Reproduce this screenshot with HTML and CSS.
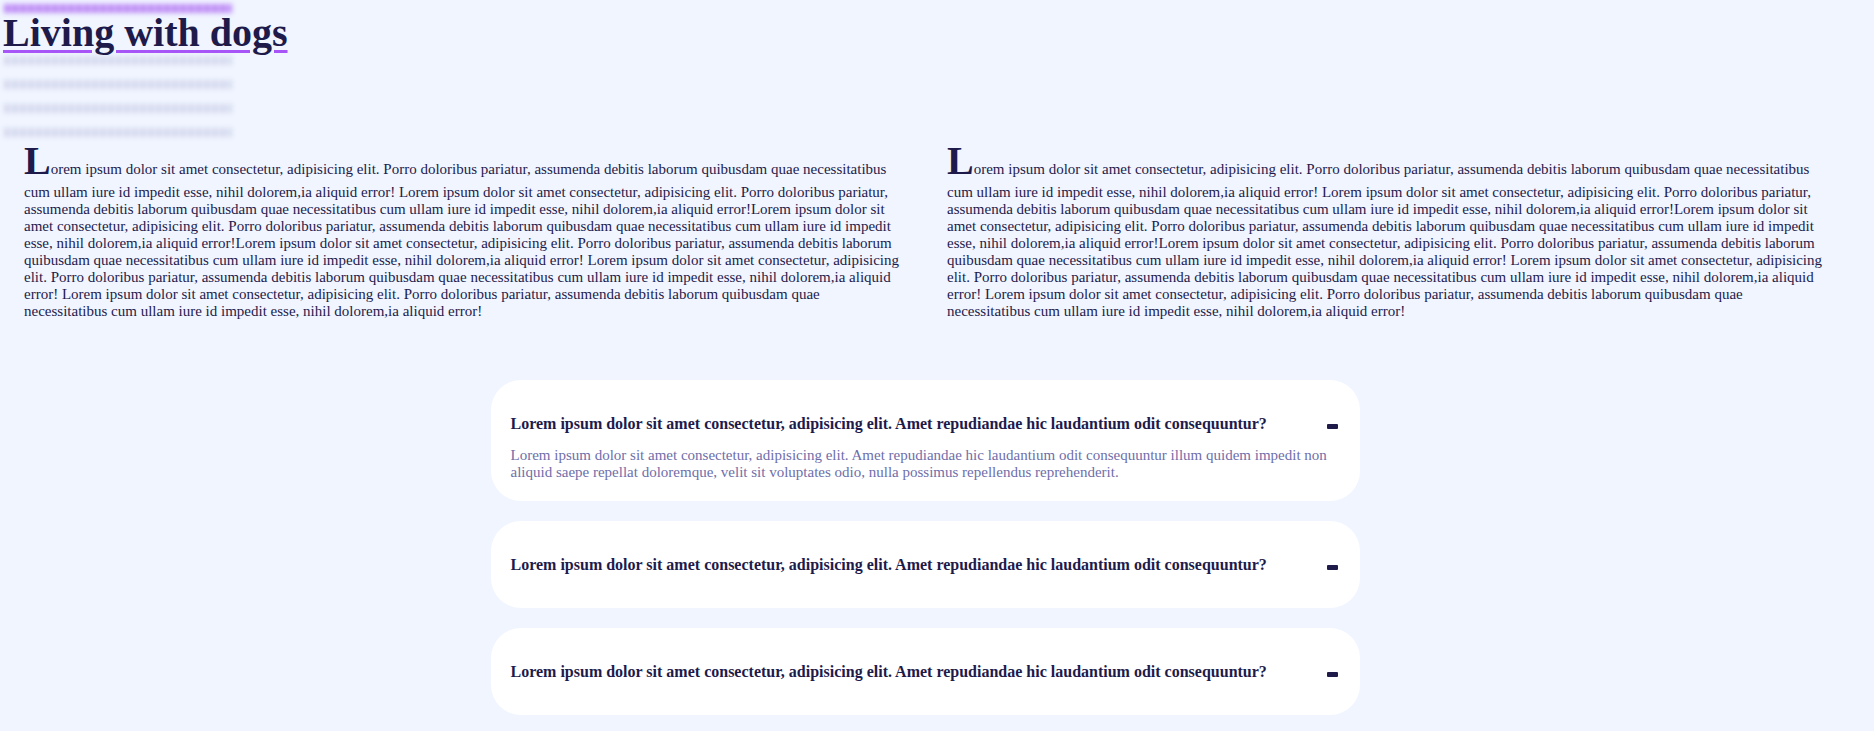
FILE: index.html
```html
<!DOCTYPE html>
<html lang="en">
<head>
<meta charset="utf-8">
<title>Living with dogs</title>
<link rel="stylesheet" href="styles.css">
</head>
<body>
<header class="site-header">
  <div class="blur-nav" aria-hidden="true">
    <span class="blur-line blur-line--active"></span>
    <span class="blur-line"></span>
    <span class="blur-line"></span>
    <span class="blur-line"></span>
    <span class="blur-line"></span>
  </div>
  <h1 class="title"><a class="title-link" href="#">Living with dogs</a></h1>
</header>

<main class="main">
  <section class="articles">
    <p class="article">Lorem ipsum dolor sit amet consectetur, adipisicing elit. Porro doloribus pariatur, assumenda debitis laborum quibusdam quae necessitatibus cum ullam iure id impedit esse, nihil dolorem,ia aliquid error! Lorem ipsum dolor sit amet consectetur, adipisicing elit. Porro doloribus pariatur, assumenda debitis laborum quibusdam quae necessitatibus cum ullam iure id impedit esse, nihil dolorem,ia aliquid error!Lorem ipsum dolor sit amet consectetur, adipisicing elit. Porro doloribus pariatur, assumenda debitis laborum quibusdam quae necessitatibus cum ullam iure id impedit esse, nihil dolorem,ia aliquid error!Lorem ipsum dolor sit amet consectetur, adipisicing elit. Porro doloribus pariatur, assumenda debitis laborum quibusdam quae necessitatibus cum ullam iure id impedit esse, nihil dolorem,ia aliquid error! Lorem ipsum dolor sit amet consectetur, adipisicing elit. Porro doloribus pariatur, assumenda debitis laborum quibusdam quae necessitatibus cum ullam iure id impedit esse, nihil dolorem,ia aliquid error! Lorem ipsum dolor sit amet consectetur, adipisicing elit. Porro doloribus pariatur, assumenda debitis laborum quibusdam quae necessitatibus cum ullam iure id impedit esse, nihil dolorem,ia aliquid error!</p>
    <p class="article">Lorem ipsum dolor sit amet consectetur, adipisicing elit. Porro doloribus pariatur, assumenda debitis laborum quibusdam quae necessitatibus cum ullam iure id impedit esse, nihil dolorem,ia aliquid error! Lorem ipsum dolor sit amet consectetur, adipisicing elit. Porro doloribus pariatur, assumenda debitis laborum quibusdam quae necessitatibus cum ullam iure id impedit esse, nihil dolorem,ia aliquid error!Lorem ipsum dolor sit amet consectetur, adipisicing elit. Porro doloribus pariatur, assumenda debitis laborum quibusdam quae necessitatibus cum ullam iure id impedit esse, nihil dolorem,ia aliquid error!Lorem ipsum dolor sit amet consectetur, adipisicing elit. Porro doloribus pariatur, assumenda debitis laborum quibusdam quae necessitatibus cum ullam iure id impedit esse, nihil dolorem,ia aliquid error! Lorem ipsum dolor sit amet consectetur, adipisicing elit. Porro doloribus pariatur, assumenda debitis laborum quibusdam quae necessitatibus cum ullam iure id impedit esse, nihil dolorem,ia aliquid error! Lorem ipsum dolor sit amet consectetur, adipisicing elit. Porro doloribus pariatur, assumenda debitis laborum quibusdam quae necessitatibus cum ullam iure id impedit esse, nihil dolorem,ia aliquid error!</p>
  </section>

  <section class="faq">
    <div class="faq-item is-open">
      <div class="faq-question">
        <span class="faq-q-text">Lorem ipsum dolor sit amet consectetur, adipisicing elit. Amet repudiandae hic laudantium odit consequuntur?</span>
        <span class="faq-icon"></span>
      </div>
      <p class="faq-answer">Lorem ipsum dolor sit amet consectetur, adipisicing elit. Amet repudiandae hic laudantium odit consequuntur illum quidem impedit non aliquid saepe repellat doloremque, velit sit voluptates odio, nulla possimus repellendus reprehenderit.</p>
    </div>
    <div class="faq-item">
      <div class="faq-question">
        <span class="faq-q-text">Lorem ipsum dolor sit amet consectetur, adipisicing elit. Amet repudiandae hic laudantium odit consequuntur?</span>
        <span class="faq-icon"></span>
      </div>
    </div>
    <div class="faq-item">
      <div class="faq-question">
        <span class="faq-q-text">Lorem ipsum dolor sit amet consectetur, adipisicing elit. Amet repudiandae hic laudantium odit consequuntur?</span>
        <span class="faq-icon"></span>
      </div>
    </div>
  </section>
</main>
</body>
</html>
```

FILE: styles.css
```css
* { box-sizing: border-box; }

html, body {
  margin: 0;
  padding: 0;
  background: #f0f5ff;
  color: #1e1b4b;
  font-family: "Liberation Serif", "Times New Roman", serif;
}

.site-header {
  position: relative;
  padding: 9px 0 0 3px;
  height: 137px;
}

.blur-nav {
  position: absolute;
  left: 4px;
  top: 4px;
  width: 228px;
  display: flex;
  flex-direction: column;
  gap: 15px;
  filter: blur(2.5px);
}

.blur-line {
  display: block;
  height: 9px;
  background: repeating-linear-gradient(90deg, #d5d9ee 0 6px, #e8ecfa 6px 8px);
}

.blur-line--active {
  background: repeating-linear-gradient(90deg, #bd8af6 0 6px, #d6b8f9 6px 8px);
  margin-bottom: 28px;
}

.title {
  position: relative;
  margin: 0;
  font-size: 40px;
  font-weight: bold;
  line-height: normal;
}

.title-link {
  color: #1e1b4b;
  text-decoration: underline;
  text-decoration-color: #a855f7;
  text-decoration-thickness: 3px;
  text-underline-offset: 4px;
}

.main {
  padding-right: 24px;
}

.articles {
  display: grid;
  grid-template-columns: 1fr 1fr;
  column-gap: 45px;
  padding: 0 25px 0 24px;
}

.article {
  margin: 0;
  font-size: 15px;
  line-height: normal;
  color: #1e1b4b;
}

.article::first-letter {
  font-size: 40px;
  font-weight: bold;
  color: #1e1b4b;
}

.faq {
  width: 869px;
  margin: 60px auto 20px;
  display: flex;
  flex-direction: column;
  gap: 20px;
}

.faq-item {
  background: #ffffff;
  border-radius: 30px;
  padding: 20px;
}

.faq-question {
  display: flex;
  align-items: center;
  justify-content: space-between;
  padding: 14.5px 0;
}

.faq-q-text {
  font-size: 16px;
  font-weight: bold;
  color: #1e1b4b;
}

.faq-icon {
  width: 11px;
  height: 5px;
  margin-top: 6px;
  margin-right: 2px;
  background: #1e1b4b;
  border-radius: 1px;
  flex: none;
}

.faq-answer {
  margin: 0;
  padding-right: 12px;
  font-size: 15px;
  line-height: normal;
  color: #6e6eaa;
}
```
